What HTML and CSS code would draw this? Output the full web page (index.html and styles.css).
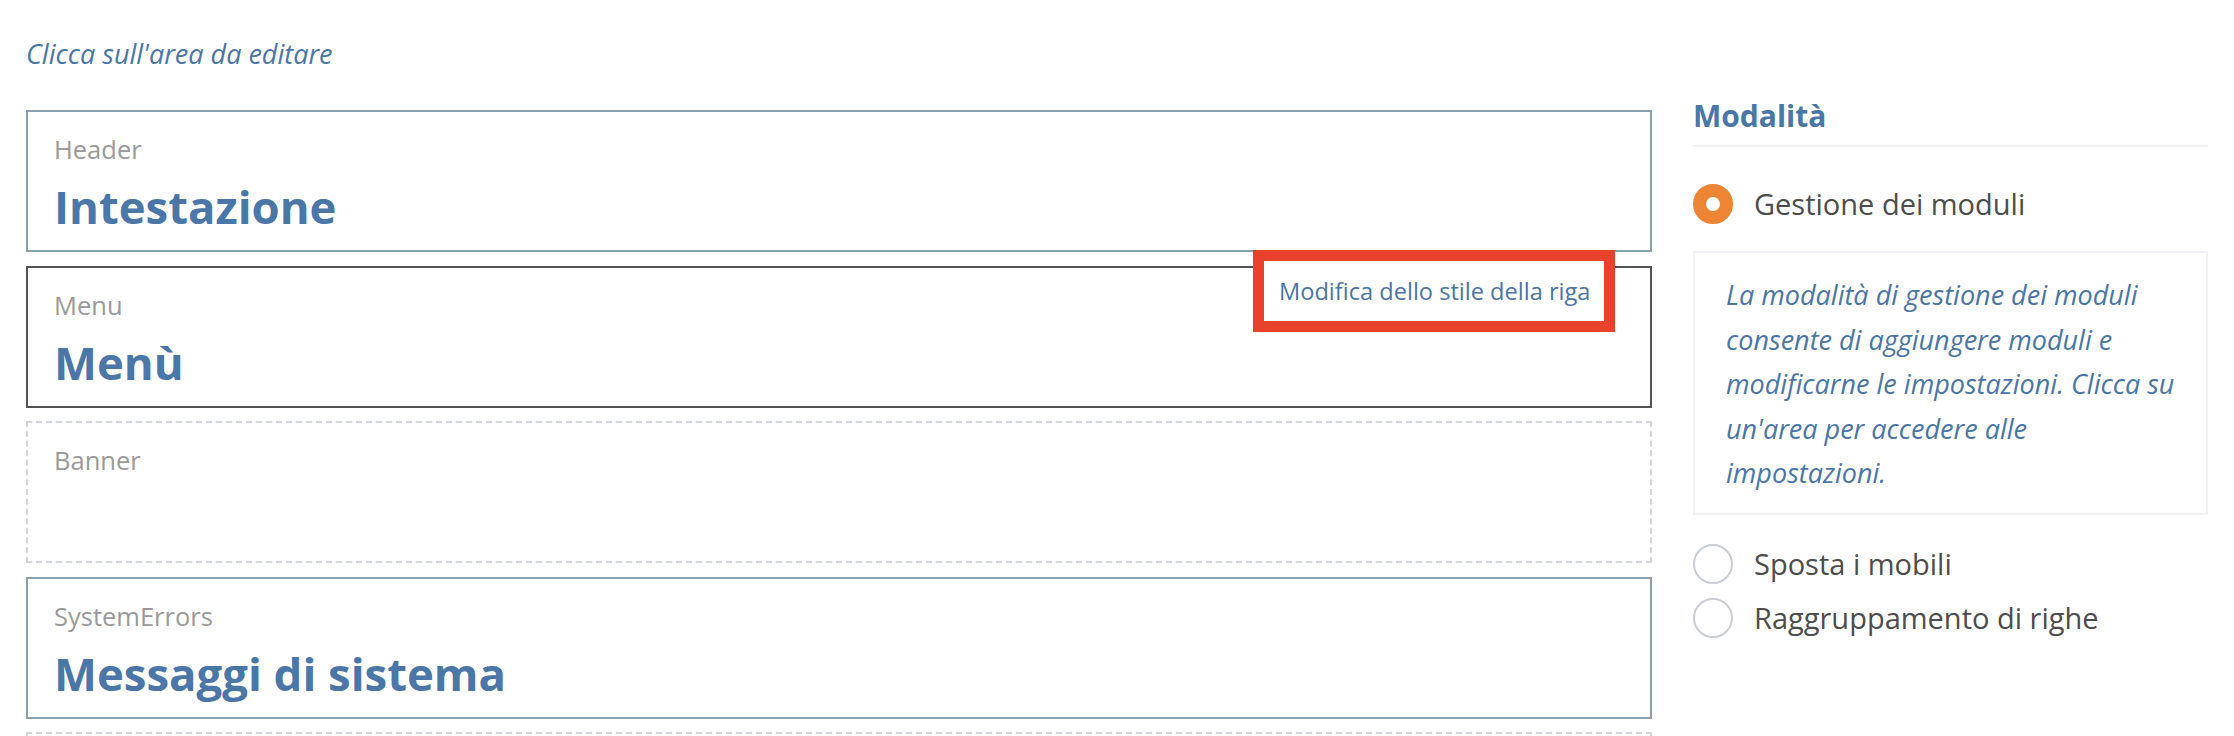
FILE: index.html
```html
<!DOCTYPE html>
<html lang="it">
<head>
<meta charset="utf-8">
<title>Layout</title>
<link rel="stylesheet" href="styles.css">
</head>
<body>
<div class="page">
  <main class="main">
    <p class="hint">Clicca sull'area da editare</p>
    <div class="area area-solid">
      <div class="area-label">Header</div>
      <div class="area-title">Intestazione</div>
    </div>
    <div class="area area-active">
      <div class="area-label">Menu</div>
      <div class="area-title">Menù</div>
      <div class="row-tip"><span>Modifica dello stile della riga</span></div>
    </div>
    <div class="area area-dashed">
      <div class="area-label">Banner</div>
    </div>
    <div class="area area-solid">
      <div class="area-label">SystemErrors</div>
      <div class="area-title">Messaggi di sistema</div>
    </div>
    <div class="area area-dashed"></div>
  </main>
  <aside class="side">
    <h2 class="side-title">Modalità</h2>
    <label class="mode">
      <span class="radio radio-on"></span>
      <span class="mode-text">Gestione dei moduli</span>
    </label>
    <div class="mode-info">La modalità di gestione dei moduli<br>consente di aggiungere moduli e<br>modificarne le impostazioni. Clicca su<br>un'area per accedere alle<br>impostazioni.</div>
    <label class="mode mode-plain">
      <span class="radio"></span>
      <span class="mode-text">Sposta i mobili</span>
    </label>
    <label class="mode mode-plain mode-next">
      <span class="radio"></span>
      <span class="mode-text">Raggruppamento di righe</span>
    </label>
  </aside>
</div>
</body>
</html>
```

FILE: styles.css
```css
* { box-sizing: border-box; }

html, body {
  margin: 0;
  padding: 0;
  background: #ffffff;
}

body {
  font-family: "Open Sans", "Noto Sans", sans-serif;
  color: #4d4d4d;
  overflow: hidden;
}

.page {
  display: flex;
  gap: 41px;
  padding: 0 26px;
  align-items: flex-start;
}

.main {
  flex: 1;
  min-width: 0;
}

.hint {
  margin: 35px 0 38px;
  font-size: 27px;
  line-height: 37px;
  font-style: italic;
  color: #4a76a8;
}

.area {
  position: relative;
  height: 142px;
  margin-bottom: 13.5px;
  padding: 20px 26px 0;
  border: 2px solid #87a1b1;
}

.area-solid { border-color: #87a1b1; }
.area-active { border-color: #545454; }
.area-dashed { border: 2px dashed #d2d6dc; }

.area-label {
  font-size: 25.5px;
  line-height: 34px;
  color: #9a9a9a;
}

.area-title {
  margin-top: 11px;
  font-size: 45.5px;
  line-height: 58px;
  font-weight: 700;
  color: #4a76a8;
}

.row-tip {
  position: absolute;
  top: -17.5px;
  right: 35px;
  width: 362px;
  height: 82px;
  display: flex;
  align-items: center;
  padding: 0 0 0 15px;
  background: #ffffff;
  border: 11px solid #e8432a;
  font-size: 23.6px;
  line-height: 30px;
  color: #4a76a8;
  white-space: nowrap;
}

.side {
  width: 515px;
  flex: none;
  padding-top: 96px;
}

.side-title {
  margin: 0;
  padding-bottom: 9px;
  border-bottom: 2px solid #f0f1f3;
  font-size: 30px;
  line-height: 40px;
  font-weight: 700;
  color: #4a76a8;
}

.mode {
  display: flex;
  align-items: center;
  gap: 21px;
  margin-top: 37px;
}

.mode-plain { margin-top: 29px; }
.mode-next { margin-top: 14px; }

.radio {
  width: 40px;
  height: 40px;
  flex: none;
  border-radius: 50%;
  border: 2px solid #c9ced6;
  background: #ffffff;
}

.radio-on {
  border: 13.5px solid #ee8535;
}

.mode-text {
  font-size: 29px;
  line-height: 40px;
  color: #4d4d4d;
}

.mode-info {
  margin-top: 27px;
  padding: 20px 16px 17px 31px;
  border: 2px solid #eff1f4;
  font-size: 27px;
  line-height: 44.5px;
  font-style: italic;
  color: #4a76a8;
  white-space: nowrap;
}
```
